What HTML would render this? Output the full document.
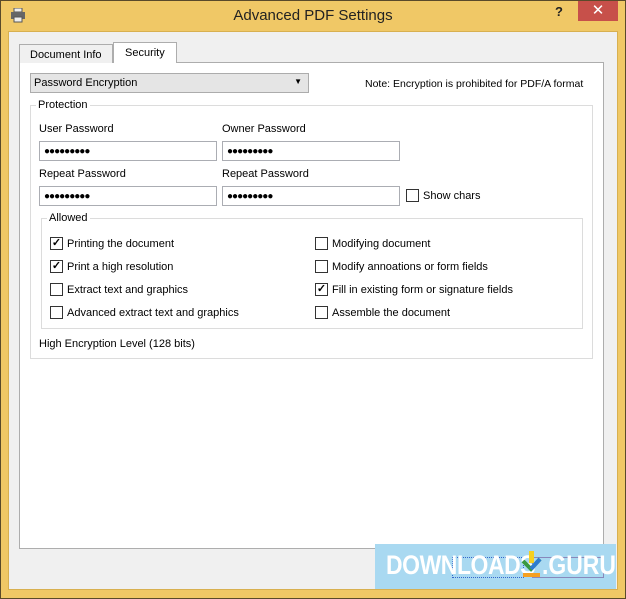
<!DOCTYPE html>
<html><head><meta charset="utf-8"><style>
*{margin:0;padding:0;box-sizing:border-box}
body{width:626px;height:599px;position:relative;overflow:hidden;background:#f0c866;font-family:"Liberation Sans",sans-serif;font-size:11px;color:#000;white-space:nowrap}
.a{position:absolute}
.win{left:0;top:0;width:626px;height:599px;border:1px solid #5a4a2a;background:#f0c866}
.client{left:8px;top:31px;width:610px;height:559px;background:#f0f0f0;border:1px solid #d8b050}
.panel{left:19px;top:62px;width:585px;height:487px;background:#fff;border:1px solid #adadad}
.tab{border:1px solid #adadad;border-bottom:none;padding:4px 9px 0;}
.inp{height:20px;border:1px solid #abadb3;background:#fff;padding:0 4px;font-size:10px;letter-spacing:-1px;line-height:19px}
.grp{border:1px solid #dcdcdc}
.lg{background:#fff;padding:0 2px}
.cb{width:13px;height:13px;border:1px solid #333;background:#fff;font-size:11px;line-height:11px;text-align:center;font-weight:bold}
</style></head><body>
<div class="a win"></div>
<svg class="a" style="left:10px;top:8px" width="16" height="15"><rect x="4" y="0" width="8" height="4" fill="#eee" stroke="#555"/><rect x="1" y="4" width="14" height="7" fill="#666"/><rect x="4" y="9" width="8" height="5" fill="#eee" stroke="#555"/></svg>
<div class="a" style="left:0;width:626px;top:7px;text-align:center;font-size:15px;color:#222">Advanced PDF Settings</div>
<div class="a" style="left:555px;top:4px;font-size:13px;font-weight:bold;color:#222">?</div>
<div class="a" style="left:578px;top:1px;width:40px;height:20px;background:#c7504a;color:#fff;text-align:center;font-size:15px;line-height:20px">✕</div>
<div class="a client"></div>
<div class="a panel"></div>
<div class="a tab" style="left:19px;top:44px;width:94px;height:19px;background:#f0f0f0;padding-left:10px">Document Info</div>
<div class="a tab" style="left:113px;top:42px;width:64px;height:21px;background:#fff;padding-left:11px">Security</div>
<div class="a" style="left:30px;top:73px;width:279px;height:20px;border:1px solid #acacac;background:#e5e5e5;padding:3px 3px">Password Encryption<span style="position:absolute;right:6px;top:3px;font-size:8px">▼</span></div>
<div class="a" style="left:365px;top:78px;font-size:10.5px">Note: Encryption is prohibited for PDF/A format</div>
<div class="a grp" style="left:30px;top:105px;width:563px;height:254px"></div>
<div class="a lg" style="left:36px;top:99px">Protection</div>
<div class="a" style="left:39px;top:123px">User Password</div>
<div class="a" style="left:222px;top:123px">Owner Password</div>
<div class="a inp" style="left:39px;top:141px;width:178px">●●●●●●●●●</div>
<div class="a inp" style="left:222px;top:141px;width:178px">●●●●●●●●●</div>
<div class="a" style="left:39px;top:168px">Repeat Password</div>
<div class="a" style="left:222px;top:168px">Repeat Password</div>
<div class="a inp" style="left:39px;top:186px;width:178px">●●●●●●●●●</div>
<div class="a inp" style="left:222px;top:186px;width:178px">●●●●●●●●●</div>
<div class="a cb" style="left:406px;top:189px"></div>
<div class="a" style="left:423px;top:190px">Show chars</div>
<div class="a grp" style="left:41px;top:218px;width:542px;height:111px"></div>
<div class="a lg" style="left:47px;top:212px">Allowed</div>
<div class="a cb" style="left:50px;top:237px">✓</div><div class="a" style="left:67px;top:238px">Printing the document</div>
<div class="a cb" style="left:50px;top:260px">✓</div><div class="a" style="left:67px;top:261px">Print a high resolution</div>
<div class="a cb" style="left:50px;top:283px"></div><div class="a" style="left:67px;top:284px">Extract text and graphics</div>
<div class="a cb" style="left:50px;top:306px"></div><div class="a" style="left:67px;top:307px">Advanced extract text and graphics</div>
<div class="a cb" style="left:315px;top:237px"></div><div class="a" style="left:332px;top:238px">Modifying document</div>
<div class="a cb" style="left:315px;top:260px"></div><div class="a" style="left:332px;top:261px">Modify annoations or form fields</div>
<div class="a cb" style="left:315px;top:283px">✓</div><div class="a" style="left:332px;top:284px">Fill in existing form or signature fields</div>
<div class="a cb" style="left:315px;top:306px"></div><div class="a" style="left:332px;top:307px">Assemble the document</div>
<div class="a" style="left:39px;top:338px">High Encryption Level (128 bits)</div>
<div class="a" style="left:375px;top:544px;width:241px;height:45px;background:#a9d9f1"></div>
<div class="a" style="left:452px;top:557px;width:72px;height:21px;border:1px dotted #36c"></div>
<div class="a" style="left:532px;top:557px;width:72px;height:21px;border:1px solid #88b"></div>
<div class="a" style="left:386px;top:550px;font-size:27px;font-weight:bold;color:#fff;letter-spacing:-0.5px;transform:scaleX(0.85);transform-origin:left">DOWNLOADS</div>
<svg class="a" style="left:520px;top:551px" width="24" height="28"><rect x="9" y="0" width="5" height="12" fill="#f5d020"/><path d="M3 10 L11 18 L20 8" stroke="#3a9a40" stroke-width="4" fill="none"/><path d="M11 18 L20 8" stroke="#2e7cd0" stroke-width="4"/><rect x="3" y="22" width="17" height="4" fill="#f5a020"/></svg>
<div class="a" style="left:542px;top:550px;font-size:27px;font-weight:bold;color:#fff;transform:scaleX(0.85);transform-origin:left">.GURU</div>
</body></html>
